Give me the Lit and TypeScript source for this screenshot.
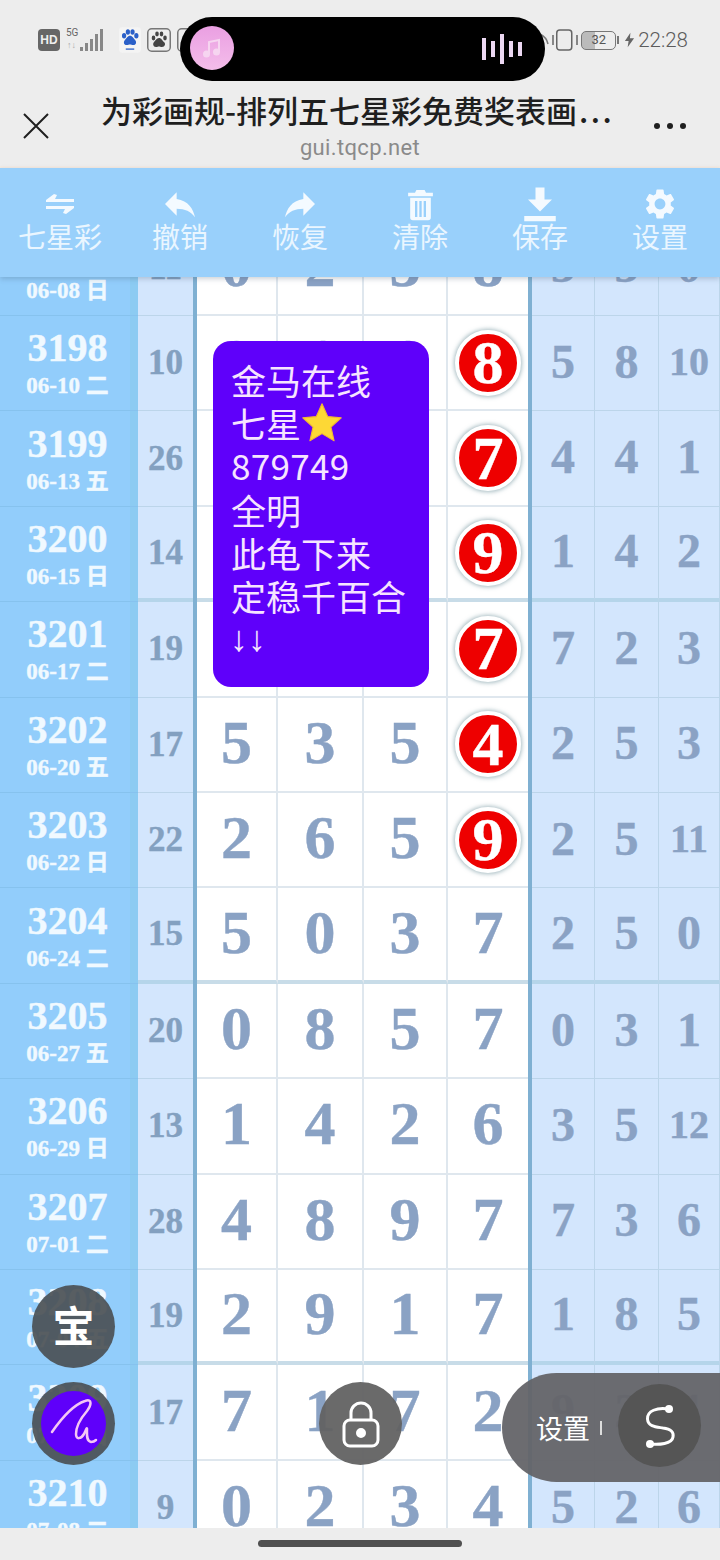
import { LitElement, html, css, svg } from "lit";
import { customElement } from "lit/decorators.js";
import { classMap } from "lit/directives/class-map.js";

interface Row {
  no: number;
  date: string;
  sum: number;
  main: number[];
  ball?: boolean;
  side: (number | string)[];
}

const rows: Row[] = [
  { no: 3197, date: "06-08 日", sum: 11, main: [0, 2, 3, 8], side: [3, 3, 0] },
  { no: 3198, date: "06-10 二", sum: 10, main: [0, 1, 1, 8], ball: true, side: [5, 8, 10] },
  { no: 3199, date: "06-13 五", sum: 26, main: [9, 5, 5, 7], ball: true, side: [4, 4, 1] },
  { no: 3200, date: "06-15 日", sum: 14, main: [1, 4, 0, 9], ball: true, side: [1, 4, 2] },
  { no: 3201, date: "06-17 二", sum: 19, main: [6, 2, 4, 7], ball: true, side: [7, 2, 3] },
  { no: 3202, date: "06-20 五", sum: 17, main: [5, 3, 5, 4], ball: true, side: [2, 5, 3] },
  { no: 3203, date: "06-22 日", sum: 22, main: [2, 6, 5, 9], ball: true, side: [2, 5, 11] },
  { no: 3204, date: "06-24 二", sum: 15, main: [5, 0, 3, 7], side: [2, 5, 0] },
  { no: 3205, date: "06-27 五", sum: 20, main: [0, 8, 5, 7], side: [0, 3, 1] },
  { no: 3206, date: "06-29 日", sum: 13, main: [1, 4, 2, 6], side: [3, 5, 12] },
  { no: 3207, date: "07-01 二", sum: 28, main: [4, 8, 9, 7], side: [7, 3, 6] },
  { no: 3208, date: "07-04 五", sum: 19, main: [2, 9, 1, 7], side: [1, 8, 5] },
  { no: 3209, date: "07-06 日", sum: 17, main: [7, 1, 7, 2], side: [9, 2, 4] },
  { no: 3210, date: "07-08 二", sum: 9, main: [0, 2, 3, 4], side: [5, 2, 6] },
];

const icons = {
  swap: svg`<path d="M8 0 0 6v2h28V5H9l2-4zM20 20l8-6v-2H0v3h19l-2 4z" />`,
  undo: svg`<path d="M10 9V5l-7 7 7 7v-4.1c5 0 8.5 1.6 11 5.1-1-5-4-10-11-11z" />`,
  redo: svg`<path transform="matrix(-1 0 0 1 24 0)" d="M10 9V5l-7 7 7 7v-4.1c5 0 8.5 1.6 11 5.1-1-5-4-10-11-11z" />`,
  trash: svg`<path fill-rule="evenodd" d="M9 1.5h6l1 2h5v2.5H3V3.500h5zM4.500 7h15v14.500a2 2 0 0 1-2 2h-11a2 2 0 0 1-2-2zM8 9.500v11.500h1.700V9.500zM11.150 9.500v11.500h1.700V9.500zM14.300 9.500v11.500H16V9.500z" />`,
  save: svg`<path d="M9 1h6v8h5l-8 8-8-8h5zM1.500 20h21v3.500h-21z" />`,
  gear: svg`<path fill-rule="evenodd" d="M19.14 12.94c.04-.3.06-.61.06-.94 0-.32-.02-.64-.07-.94l2.03-1.58c.18-.14.23-.41.12-.61l-1.92-3.32c-.12-.22-.37-.29-.59-.22l-2.39.96c-.5-.38-1.03-.7-1.62-.94l-.36-2.54c-.04-.24-.24-.41-.48-.41h-3.84c-.24 0-.43.17-.47.41l-.36 2.54c-.59.24-1.13.57-1.62.94l-2.39-.96c-.22-.08-.47 0-.59.22L2.74 8.87c-.12.21-.08.47.12.61l2.03 1.58c-.05.3-.09.63-.09.94s.02.64.07.94l-2.03 1.58c-.18.14-.23.41-.12.61l1.92 3.32c.12.22.37.29.59.22l2.39-.96c.5.38 1.03.7 1.62.94l.36 2.54c.05.24.24.41.48.41h3.84c.24 0 .44-.17.47-.41l.36-2.54c.59-.24 1.13-.56 1.62-.94l2.39.96c.22.08.47 0 .59-.22l1.92-3.32c.12-.22.07-.47-.12-.61l-2.01-1.58zM12 15.6c-1.98 0-3.6-1.62-3.6-3.6s1.62-3.6 3.6-3.6 3.6 1.62 3.6 3.6-1.62 3.6-3.6 3.6z" />`,
};

const tools = [
  { label: "七星彩", box: "0 0 28 20", w: 28, h: 20, icon: icons.swap },
  { label: "撤销", box: "0 0 24 24", w: 40, h: 40, icon: icons.undo },
  { label: "恢复", box: "0 0 24 24", w: 40, h: 40, icon: icons.redo },
  { label: "清除", box: "0 0 24 24", w: 33, h: 33, icon: icons.trash },
  { label: "保存", box: "0 0 24 24", w: 36, h: 36, icon: icons.save },
  { label: "设置", box: "0 0 24 24", w: 36, h: 36, icon: icons.gear },
];

@customElement("app-root")
export class AppRoot extends LitElement {
  static override styles = css`
    :host {
      display: flex;
      flex-direction: column;
      position: relative;
      width: 720px;
      height: 1560px;
      overflow: hidden;
      background: #ededed;
      font-family: "Noto Sans CJK SC", "Noto Sans", sans-serif;
    }

    /* status bar */
    .status {
      height: 84px;
      flex: none;
      display: flex;
      align-items: center;
      justify-content: space-between;
      padding: 0 32px 4px 38px;
      box-sizing: border-box;
      color: #5c5c5c;
    }
    .status-left,
    .status-right {
      display: flex;
      align-items: center;
    }
    .status-left {
      gap: 10px;
    }
    .hd {
      width: 22px;
      height: 22px;
      border-radius: 4px;
      background: #666;
      color: #eee;
      font: bold 12px/22px "Liberation Sans", sans-serif;
      text-align: center;
    }
    .clock {
      font: 20.500px "Roboto", sans-serif;
      font-weight: 300;
      margin-left: 3px;
    }
    .battery {
      width: 35px;
      height: 19px;
      box-sizing: border-box;
      border: 1.500px solid #777;
      border-radius: 5px;
      font: 13px/16px "Roboto", sans-serif;
      text-align: center;
      background: linear-gradient(90deg, #bbb 40%, transparent 40%);
      color: #555;
      margin-left: 2px;
    }
    .nub {
      width: 2px;
      height: 8px;
      background: #777;
      margin: 0 5px 0 1px;
    }

    /* page header */
    .header {
      height: 84px;
      flex: none;
      display: grid;
      grid-template-columns: 72px 1fr 72px;
      align-items: center;
      box-sizing: border-box;
      border-bottom: 2px solid #f3ebe4;
    }
    .close {
      justify-self: center;
      margin-top: 2px;
    }
    .heading {
      text-align: center;
      min-width: 0;
      margin-top: -2px;
    }
    .title {
      font-size: 31px;
      line-height: 44px;
      font-weight: 500;
      color: #1f1f1f;
      white-space: nowrap;
      margin-left: 29px;
      text-align: left;
    }
    .dots {
      letter-spacing: 2.500px;
      margin-left: 2px;
    }
    .url {
      font: 22px/26px "Roboto", sans-serif;
      color: #8a8a8a;
      letter-spacing: 0.35px;
      margin-top: 3px;
    }
    .more {
      display: flex;
      gap: 7px;
      margin: 2px 0 0 6px;
    }
    .more span {
      width: 6px;
      height: 6px;
      border-radius: 50%;
      background: #1f1f1f;
    }

    /* toolbar */
    .toolbar {
      height: 109px;
      flex: none;
      display: grid;
      grid-template-columns: repeat(6, 1fr);
      background: #99d0fb;
      position: relative;
      z-index: 2;
      box-shadow: 0 2px 5px rgba(60, 80, 100, 0.25);
    }
    .tool {
      display: flex;
      flex-direction: column;
      align-items: center;
      color: #eaf6ff;
      font-size: 28px;
      line-height: 40px;
    }
    .tool-icon {
      height: 44px;
      margin-top: 14px;
      display: flex;
      align-items: center;
      justify-content: center;
    }
    .tool-icon svg {
      fill: #f4faff;
    }
    .tool-label {
      margin-top: -10px;
    }

    /* table */
    .viewport {
      flex: 1;
      overflow: hidden;
    }
    .rows {
      margin-top: -56.4px;
    }
    .row {
      height: 95.42px;
      display: grid;
      grid-template-columns: 138px 55px 4px 81px 86px 84px 80px 4px 63px 64px 61px;
      font-family: "Liberation Serif", "Noto Serif", serif;
      font-weight: 700;
      color: #8aa2c4;
      -webkit-text-stroke: 0.4px currentColor;
    }
    .cell {
      display: flex;
      align-items: center;
      justify-content: center;
      min-width: 0;
      box-sizing: border-box;
      border-bottom: 1px solid #bcd5ea;
    }
    .label {
      flex-direction: column;
      background: #92cdfb;
      box-shadow: inset -8px 0 0 #8ccbf2;
      color: #f0f9ff;
      padding-right: 3px;
      border-bottom-color: #86c2ee;
    }
    .no {
      font-size: 40px;
      line-height: 42px;
    }
    .date {
      font-size: 23px;
      line-height: 26px;
      margin-top: 4px;
      font-family: "Liberation Serif", "Noto Sans CJK SC", serif;
    }
    .sum {
      background: #d3e6fd;
      font-size: 35px;
      color: #83a0c0;
    }
    .rule {
      background: #7fb0d2;
    }
    .main {
      background: #fff;
      font-size: 62px;
      padding-bottom: 4px;
      border-right: 2px solid #dfe7ee;
      border-bottom: 2px solid #dfe7ee;
    }
    .main.last {
      border-right: 0;
    }
    .side {
      background: #d3e6fd;
      font-size: 48px;
      padding-bottom: 4px;
      border-right: 1px solid #bcd5ea;
    }
    .side.small {
      font-size: 40px;
    }
    .thick .sum,
    .thick .side {
      border-bottom: 4px solid #b5d5ea;
    }
    .thick .main {
      border-bottom: 4px solid #c8dce8;
    }
    .ball {
      width: 58px;
      height: 58px;
      margin-top: 4px;
      border-radius: 50%;
      background: #ee0000;
      color: #fff;
      border: 4px solid #fff;
      box-shadow: 0 0 4px 1px rgba(90, 130, 140, 0.55);
      display: flex;
      align-items: center;
      justify-content: center;
      font-size: 62px;
      flex: none;
    }

    /* overlays */
    .island {
      position: absolute;
      left: 180px;
      top: 17px;
      width: 365px;
      height: 64px;
      border-radius: 32px;
      background: #000;
      z-index: 5;
    }
    .disc {
      position: absolute;
      left: 10px;
      top: 9px;
      width: 44px;
      height: 44px;
      border-radius: 50%;
      background: linear-gradient(#ea9fe2, #f4bdea);
      display: flex;
      align-items: center;
      justify-content: center;
    }
    .wave {
      position: absolute;
      left: 302px;
      top: 17px;
      height: 30px;
      display: flex;
      align-items: center;
      gap: 5px;
    }
    .wave span {
      width: 4px;
      background: #ecd8f2;
    }
    .note {
      position: absolute;
      left: 213px;
      top: 341px;
      width: 216px;
      height: 346px;
      box-sizing: border-box;
      padding: 17px 0 0 18px;
      border-radius: 18px;
      background: #5f00fa;
      color: #f6e4ff;
      font-size: 35px;
      line-height: 43.3px;
      z-index: 1;
    }
    .note div {
      display: flex;
      align-items: center;
      white-space: nowrap;
      height: 43.3px;
      box-sizing: border-box;
    }
    .note .digits {
      letter-spacing: 0.3px;
      padding-bottom: 3px;
    }
    .note .arrows {
      font: 36px "Liberation Sans", sans-serif;
      margin-left: -1px;
    }
    .fab {
      position: absolute;
      width: 83px;
      height: 83px;
      border-radius: 50%;
      background: rgba(75, 80, 85, 0.92);
      display: flex;
      align-items: center;
      justify-content: center;
      color: #fff;
      z-index: 3;
    }
    .fab-bao {
      left: 32px;
      top: 1285px;
      font-size: 42px;
      line-height: 78px;
      align-items: flex-start;
      font-family: "Noto Sans CJK SC", sans-serif;
      font-weight: 700;
    }
    .fab-sign {
      left: 32px;
      top: 1382px;
    }
    .sign-disc {
      width: 65px;
      height: 65px;
      border-radius: 50%;
      background: #5f00fa;
    }
    .fab-lock {
      left: 319px;
      top: 1382px;
      background: rgba(98, 98, 98, 0.95);
    }
    .dock {
      position: absolute;
      left: 502px;
      top: 1373px;
      width: 218px;
      height: 109px;
      border-radius: 55px 0 0 55px;
      background: rgba(100, 100, 104, 0.95);
      color: #fff;
      font-size: 27px;
      z-index: 3;
      display: flex;
      align-items: center;
      padding-left: 34px;
      box-sizing: border-box;
    }
    .dock i {
      width: 2px;
      height: 14px;
      background: #ddd;
      margin-left: 10px;
    }
    .dock-btn {
      position: absolute;
      left: 116px;
      top: 11px;
      width: 83px;
      height: 83px;
      border-radius: 50%;
      background: #555;
      display: flex;
      align-items: center;
      justify-content: center;
    }

    /* gesture bar */
    .gesture {
      height: 32px;
      flex: none;
      display: flex;
      justify-content: center;
      padding-top: 12px;
      box-sizing: border-box;
      background: #ededed;
      position: relative;
      z-index: 2;
    }
    .gesture span {
      width: 204px;
      height: 7px;
      border-radius: 4px;
      background: #505050;
    }
  `;

  private renderRow(row: Row, index: number) {
    return html`
      <div class=${classMap({ row: true, thick: index % 4 === 3 })}>
        <div class="cell label">
          <span class="no">${row.no}</span>
          <span class="date">${row.date}</span>
        </div>
        <div class="cell sum">${row.sum}</div>
        <div class="rule"></div>
        ${row.main.map((n, i) => {
          const last = i === row.main.length - 1;
          return html`<div class=${classMap({ cell: true, main: true, last })}>
            ${last && row.ball ? html`<span class="ball">${n}</span>` : n}
          </div>`;
        })}
        <div class="rule"></div>
        ${row.side.map(
          (n) => html`<div class=${classMap({ cell: true, side: true, small: Number(n) > 9 })}>${n}</div>`
        )}
      </div>
    `;
  }

  override render() {
    return html`
      <div class="status">
        <div class="status-left">
          <span class="hd">HD</span>
          <svg width="38" height="26" viewBox="0 0 38 26" style="margin-left:-4px">
            <text x="0" y="9" font-size="10" font-family="Roboto" fill="#666">5G</text>
            <text x="1" y="21" font-size="9" font-family="Roboto" fill="#aaa">↑↓</text>
            <g fill="#888">
              <rect x="14" y="20" width="3" height="4" />
              <rect x="19" y="16" width="3" height="8" />
              <rect x="24" y="12" width="3" height="12" />
              <rect x="29" y="7" width="3" height="17" />
              <rect x="34" y="2" width="3" height="22" />
            </g>
          </svg>
          <svg width="22" height="26" viewBox="0 0 26 30" style="margin-left:5px">
            <rect width="26" height="30" rx="4" fill="#f4f4f4" />
            <g fill="#2a5fc8">
              <ellipse cx="6" cy="10" rx="2.500" ry="3.200" />
              <ellipse cx="10.500" cy="5.500" rx="2.500" ry="3.200" />
              <ellipse cx="16" cy="5.500" rx="2.500" ry="3.200" />
              <ellipse cx="20.500" cy="10" rx="2.500" ry="3.200" />
              <path d="M13 10c3 0 4 3 6 5s1.500 6-2 6c-2 0-2.500-.7-4-.7s-2 .7-4 .7c-3.500 0-4-4-2-6s3-5 6-5z" />
              <rect x="8" y="25" width="10" height="1.500" />
            </g>
          </svg>
          <svg width="24" height="24" viewBox="0 0 24 24" style="margin-left:-4px">
            <rect x=".75" y=".75" width="22.500" height="22.500" rx="4" fill="none" stroke="#777" stroke-width="1.500" />
            <g fill="#444">
              <ellipse cx="6.500" cy="10" rx="1.800" ry="2.400" />
              <ellipse cx="10" cy="6" rx="1.800" ry="2.400" />
              <ellipse cx="14.500" cy="6" rx="1.800" ry="2.400" />
              <ellipse cx="18" cy="10" rx="1.800" ry="2.400" />
              <path d="M12 10c2.500 0 3 2.500 5 4s1 5-2 5c-1.500 0-2-.5-3-.5s-1.500.5-3 .5c-3 0-3.500-3.500-2-5s2.500-4 5-4z" />
            </g>
          </svg>
          <svg width="24" height="24" viewBox="0 0 24 24" style="margin-left:-4px">
            <rect x=".75" y=".75" width="22.500" height="22.500" rx="4" fill="none" stroke="#777" stroke-width="1.500" />
          </svg>
        </div>
        <div class="status-right">
          <svg width="14" height="14" viewBox="0 0 14 14" fill="none" stroke="#777" stroke-width="1.500">
            <path d="M2 1c4 2 7 5 8 10" />
          </svg>
          <svg width="27" height="24" viewBox="0 0 27 24" fill="none" stroke="#666" stroke-width="1.500">
            <rect x="4.750" y="2" width="15" height="20" rx="3" />
            <path d="M1 7v10M25 7v10" />
          </svg>
          <span class="battery">32</span>
          <span class="nub"></span>
          <svg width="11" height="16" viewBox="0 0 12 16" fill="#666"><path d="M7 0 1 9h4l-1 7 7-10H6.500z" /></svg>
          <span class="clock">22:28</span>
        </div>
      </div>

      <div class="island">
        <div class="disc">
          <svg width="22" height="22" viewBox="0 0 22 22" fill="none" stroke="#f6d5f0" stroke-width="2">
            <path d="M8 17V5l10-2v12" />
            <circle cx="5.500" cy="17" r="2.500" fill="#f6d5f0" />
            <circle cx="15.500" cy="15" r="2.500" fill="#f6d5f0" />
          </svg>
        </div>
        <div class="wave">
          ${[22, 16, 30, 16, 14].map((h) => html`<span style="height:${h}px"></span>`)}
        </div>
      </div>

      <div class="header">
        <svg class="close" width="28" height="28" viewBox="0 0 28 28" stroke="#1f1f1f" stroke-width="2">
          <path d="M2 2 26 26M26 2 2 26" />
        </svg>
        <div class="heading">
          <div class="title">为彩画规-排列五七星彩免费奖表画<span class="dots">...</span></div>
          <div class="url">gui.tqcp.net</div>
        </div>
        <div class="more"><span></span><span></span><span></span></div>
      </div>

      <div class="toolbar">
        ${tools.map(
          (t) => html`
            <div class="tool">
              <div class="tool-icon">
                <svg width=${t.w} height=${t.h} viewBox=${t.box}>${t.icon}</svg>
              </div>
              <div class="tool-label">${t.label}</div>
            </div>
          `
        )}
      </div>

      <div class="viewport">
        <div class="rows">${rows.map((r, i) => this.renderRow(r, i))}</div>
      </div>

      <div class="note">
        <div>金马在线</div>
        <div>
          七星<svg width="44" height="44" viewBox="0 0 24 24" style="margin-left:-1px">
            <path
              fill="#fdd835"
              stroke="#f2b632"
              stroke-width=".6"
              stroke-linejoin="round"
              d="M12 1.500l3.100 7 7.400.7-5.600 5 1.700 7.500L12 17.800l-6.600 3.900 1.700-7.500-5.600-5 7.400-.7z"
            />
          </svg>
        </div>
        <div class="digits">879749</div>
        <div>全明</div>
        <div>此龟下来</div>
        <div>定稳千百合</div>
        <div class="arrows">↓↓</div>
      </div>

      <div class="fab fab-bao">宝</div>
      <div class="fab fab-sign">
        <div class="sign-disc">
          <svg width="65" height="65" viewBox="0 0 65 65" fill="none" stroke="#f5c6f5" stroke-width="2.500" stroke-linecap="round" stroke-linejoin="round">
            <path d="M11 41C20 28 32 14 44 10c8-3 6 5 2 10-6 7-11 16-11 23 0 6 5 5 8 0 2-4 3-7 3-5 0 5-1 12 4 13 2 0 4-1 5-2" />
          </svg>
        </div>
      </div>
      <div class="fab fab-lock">
        <svg width="40" height="48" viewBox="0 0 40 48" fill="none" stroke="#fff" stroke-width="3">
          <rect x="3" y="20" width="34" height="26" rx="6" />
          <path d="M10 20v-7a10 10 0 0 1 20 0v7" />
          <circle cx="20" cy="33" r="3.500" fill="#fff" />
        </svg>
      </div>
      <div class="dock">
        设置<i></i>
        <div class="dock-btn">
          <svg width="42" height="50" viewBox="0 0 42 50" fill="none" stroke="#fff" stroke-width="3" stroke-linecap="round">
            <path d="M30 8C18 6 8 10 8.500 18 9 26 18 26 24 27c8 1 11 4 10 9-1 7-14 8-23 7" />
            <circle cx="30" cy="8" r="4" fill="#fff" stroke="none" />
            <circle cx="11" cy="43" r="4" fill="#fff" stroke="none" />
          </svg>
        </div>
      </div>

      <div class="gesture"><span></span></div>
    `;
  }
}
